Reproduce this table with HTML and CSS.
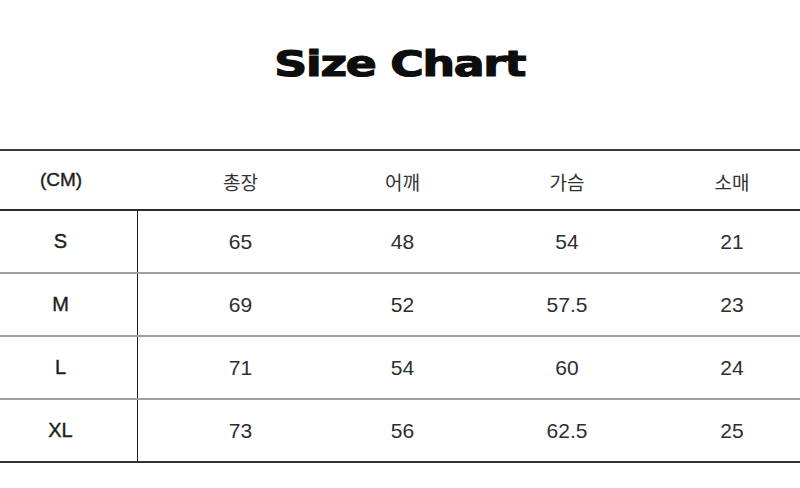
FILE: index.html
```html
<!DOCTYPE html>
<html lang="ko">
<head>
<meta charset="utf-8">
<title>Size Chart</title>
<link rel="stylesheet" href="styles.css">
</head>
<body>
<header class="title-wrap">
  <h1 class="title">Size Chart</h1>
</header>
<section class="chart">
  <div class="row head">
    <div class="cell label">(CM)</div>
    <div class="cell">총장</div>
    <div class="cell">어깨</div>
    <div class="cell">가슴</div>
    <div class="cell">소매</div>
  </div>
  <div class="row">
    <div class="cell label">S</div>
    <div class="cell">65</div>
    <div class="cell">48</div>
    <div class="cell">54</div>
    <div class="cell">21</div>
  </div>
  <div class="row">
    <div class="cell label">M</div>
    <div class="cell">69</div>
    <div class="cell">52</div>
    <div class="cell">57.5</div>
    <div class="cell">23</div>
  </div>
  <div class="row">
    <div class="cell label">L</div>
    <div class="cell">71</div>
    <div class="cell">54</div>
    <div class="cell">60</div>
    <div class="cell">24</div>
  </div>
  <div class="row last">
    <div class="cell label">XL</div>
    <div class="cell">73</div>
    <div class="cell">56</div>
    <div class="cell">62.5</div>
    <div class="cell">25</div>
  </div>
</section>
</body>
</html>
```
FILE: styles.css
```css
html, body {
  margin: 0;
  padding: 0;
  background: #ffffff;
}
body {
  width: 800px;
  height: 488px;
  overflow: hidden;
  font-family: "Liberation Sans", Arial, "Noto Sans CJK KR", sans-serif;
  color: #2a2a2a;
}
.title-wrap {
  height: 149px;
  display: flex;
  justify-content: center;
}
.title {
  margin: 0;
  padding-top: 39px;
  height: 50px;
  font-family: "DejaVu Sans", sans-serif;
  font-weight: bold;
  font-size: 36px;
  line-height: 50px;
  color: #0d0d0d;
  letter-spacing: -1px;
  -webkit-text-stroke: 1.2px #0d0d0d;
  transform: scaleX(1.27);
  transform-origin: center;
}
.chart {
  width: 800px;
}
.row {
  display: grid;
  grid-template-columns: 138px 161px 163px 166px 164px 8px;
  height: 61px;
  border-bottom: 2px solid #a0a0a0;
}
.row.head {
  height: 58px;
  border-top: 2px solid #3a3a3a;
  border-bottom: 2px solid #2e2e2e;
}
.row.last {
  border-bottom: 2px solid #333333;
}
.cell {
  display: flex;
  align-items: center;
  justify-content: center;
  padding-left: 44px;
  font-size: 21px;
  color: #2e2e2e;
}
.head .cell {
  font-family: "Noto Sans CJK KR", "Liberation Sans", sans-serif;
  font-size: 19px;
  color: #333333;
  padding-top: 2px;
}
.cell.label {
  padding-left: 0;
  padding-right: 16px;
  font-family: "Liberation Sans", Arial, sans-serif;
  font-size: 20px;
  color: #1e1e1e;
  -webkit-text-stroke: 0.4px #1e1e1e;
}
.head .cell.label {
  font-size: 19px;
  padding-top: 0;
}
.row:not(.head) .cell.label {
  border-right: 1px solid #1a1a1a;
}
```
